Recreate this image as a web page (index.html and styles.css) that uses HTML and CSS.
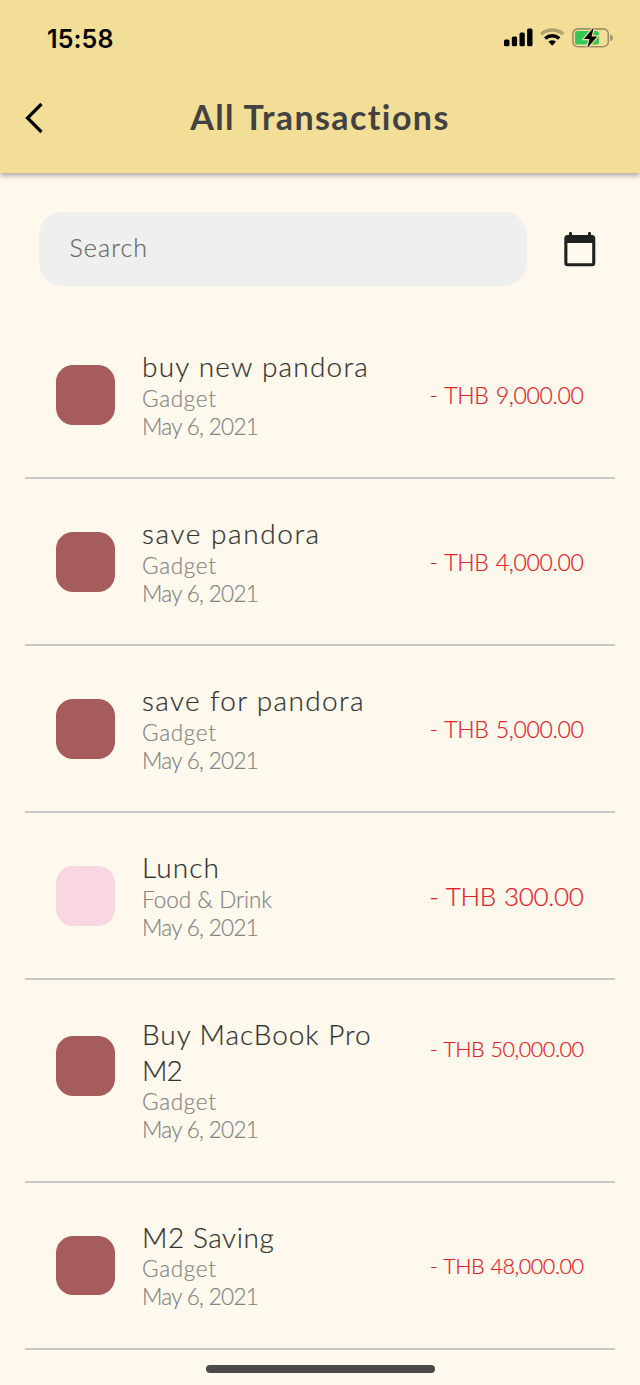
FILE: index.html
```html
<!DOCTYPE html>
<html lang="en">
<head>
<meta charset="utf-8">
<title>All Transactions</title>
<link rel="stylesheet" href="styles.css">
</head>
<body>
<header class="header">
  <div class="status">
    <span class="clock">15:58</span>
    <svg class="indicators" width="112" height="24" viewBox="0 0 112 24">
      <g><rect x="1" y="13.5" width="5.5" height="6.7" rx="1.5"/><rect x="8.8" y="10.5" width="5.3" height="9.7" rx="1.5"/><rect x="16.5" y="6.5" width="5.3" height="13.7" rx="1.5"/><rect x="24.1" y="2.6" width="5.4" height="17.6" rx="1.5"/></g>
      <g fill="none" stroke="#000"><path d="M38.2 8.2A16.5 16.5 0 0 1 60.2 8.2" stroke-width="3.5" opacity=".27"/><path d="M42.2 12.5A10.5 10.5 0 0 1 56.2 12.5" stroke-width="3.5"/></g>
      <path d="M45.4 15.7Q49.2 13 53 15.7L49.2 19.8Z"/>
      <rect x="69.9" y="2.9" width="35.4" height="17.8" rx="5" fill="none" stroke="#9c9069" stroke-width="1.6"/>
      <rect x="72" y="5" width="24" height="13.6" rx="2.7" fill="#35c759"/>
      <path d="M107.2 8.4Q110 9.2 110 11.8T107.2 15.2Z" fill="#9c9069"/>
      <path d="M90.6 1.6L81 13.1H86.5L84.4 22L94.2 10.4H88.6Z" stroke="#f3de98" stroke-width="2.4" paint-order="stroke"/>
    </svg>
  </div>
  <div class="titlebar">
    <svg class="back" width="20" height="32" viewBox="0 0 20 32"><path d="M17.5 2L3.5 16L17.5 30" fill="none" stroke="#000" stroke-width="3.2"/></svg>
    <h1 class="title">All Transactions</h1>
  </div>
</header>
<main>
  <div class="tools">
    <div class="search">Search</div>
    <svg class="calendar" width="32" height="36" viewBox="0 0 32 36"><path fill-rule="evenodd" d="M5 1Q5 0 6.5 0T8 1V3H24V1Q24 0 25.5 0T27 1V3H28Q31.3 3 31.3 6.5V31Q31.3 34.3 28 34.3H3.6Q.3 34.3 .3 31V6.5Q.3 3 3.6 3H5ZM3.4 11V31.2H28.2V11Z" fill="#1e211f"/></svg>
  </div>
  <ul class="list">
    <li class="item"><span class="swatch"></span><div class="info"><div class="name n1">buy new pandora</div><div class="meta gadget">Gadget</div><div class="meta date">May 6, 2021</div></div><div class="amount a4">- THB 9,000.00</div></li>
    <li class="item"><span class="swatch"></span><div class="info"><div class="name n2">save pandora</div><div class="meta gadget">Gadget</div><div class="meta date">May 6, 2021</div></div><div class="amount a4">- THB 4,000.00</div></li>
    <li class="item"><span class="swatch"></span><div class="info"><div class="name n3">save for pandora</div><div class="meta gadget">Gadget</div><div class="meta date">May 6, 2021</div></div><div class="amount a4">- THB 5,000.00</div></li>
    <li class="item"><span class="swatch food"></span><div class="info"><div class="name n4">Lunch</div><div class="meta drink">Food &amp; Drink</div><div class="meta date">May 6, 2021</div></div><div class="amount a3">- THB 300.00</div></li>
    <li class="item tall"><span class="swatch"></span><div class="info"><div class="name n5">Buy MacBook Pro<br><span class="model">M2</span></div><div class="meta gadget">Gadget</div><div class="meta date">May 6, 2021</div></div><div class="amount a5">- THB 50,000.00</div></li>
    <li class="item"><span class="swatch"></span><div class="info"><div class="name n6">M2 Saving</div><div class="meta gadget">Gadget</div><div class="meta date">May 6, 2021</div></div><div class="amount a5">- THB 48,000.00</div></li>
  </ul>
</main>
<div class="home"></div>
</body>
</html>
```
FILE: styles.css
```css
* { box-sizing: border-box; }
body { margin: 0; height: 1385px; overflow: hidden; display: flex; flex-direction: column; background: #fff9ed; font-family: Lato, "Noto Sans", sans-serif; font-weight: 300; }
.header { flex: none; height: 173px; background: #f3de98; box-shadow: 0 2px 6px rgba(0,0,0,.38); }
.status { height: 76px; padding: 2px 25px 0 47px; display: flex; justify-content: space-between; align-items: center; }
.clock { font: 600 25px/30px Inter, sans-serif; letter-spacing: .1px; }
.indicators { margin-top: -2px; }
.titlebar { height: 83px; display: grid; grid-template-columns: 44px 1fr 44px; align-items: center; }
.back { margin-left: 24px; }
.title { margin: -1px 0 0; text-align: center; font-size: 34px; line-height: 42px; font-weight: 700; color: #424242; letter-spacing: 1.4px; white-space: nowrap; }
.tools { height: 139px; padding: 38.5px 44px 0 38.5px; display: flex; justify-content: space-between; align-items: flex-start; }
.search { width: 488.5px; height: 74.5px; border-radius: 23px; background: #efefef; padding: 0 31px; font-size: 25px; line-height: 71px; color: #6b6a64; letter-spacing: 1.1px; -webkit-text-stroke: .2px; }
.calendar { margin-top: 20.5px; }
.list { list-style: none; margin: 0 25px; padding: 0; }
.item { height: 167px; border-bottom: 2px solid #c9cac8; padding: 37px 31.5px 0 30.5px; display: flex; align-items: flex-start; }
.item.tall { height: 202.5px; }
.swatch { flex: none; width: 59.5px; height: 59.5px; border-radius: 17px; background: #a65b5c; margin: 16px 27px 0 0; }
.tall .swatch { margin-top: 19px; }
.swatch.food { background: #f9d7e1; }
.info { flex: 1; min-width: 0; white-space: nowrap; -webkit-text-stroke: .2px; }
.name { font-size: 28px; line-height: 35.5px; color: #333; }
.n1 { letter-spacing: 1.22px; }
.n2 { letter-spacing: 1.58px; }
.n3 { letter-spacing: 1.35px; }
.n4 { letter-spacing: 1.1px; }
.n5 { letter-spacing: .95px; }
.n6 { letter-spacing: .55px; }
.model { letter-spacing: -1px; }
.meta { font-size: 22.5px; line-height: 28px; color: #858585; }
.gadget { letter-spacing: .7px; }
.date { letter-spacing: -.7px; }
.amount { margin-top: 32px; line-height: 28px; color: #e32228; white-space: nowrap; -webkit-text-stroke: .2px; }
.tall .amount { margin-top: 18px; }
.a3 { font-size: 26px; letter-spacing: -.35px; word-spacing: 1.5px; }
.a4 { font-size: 23px; letter-spacing: -.35px; word-spacing: 1.5px; }
.a5 { font-size: 21.5px; letter-spacing: -.45px; word-spacing: 1px; }
.home { position: absolute; left: 205.5px; top: 1364.5px; width: 229px; height: 8px; border-radius: 4px; background: #4a4a4a; }
```
